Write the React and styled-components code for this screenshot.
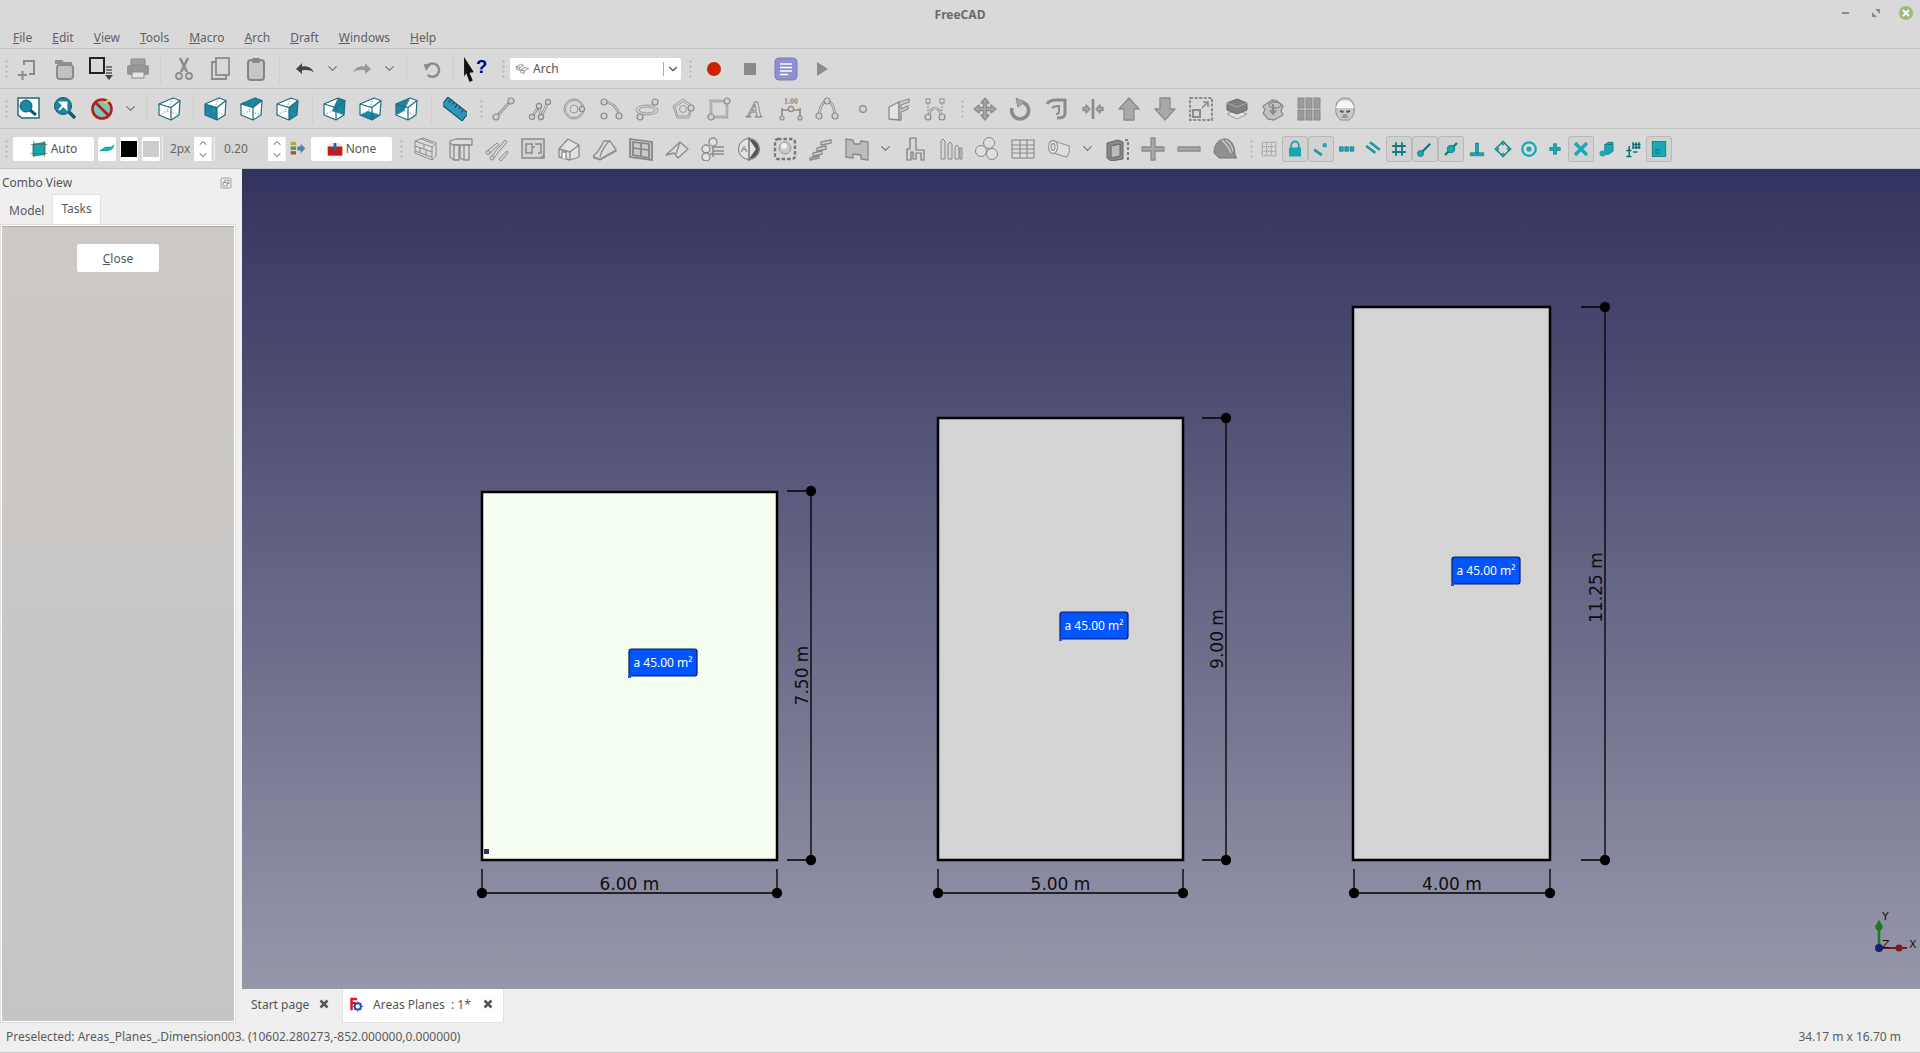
import React from 'react';
import styled, { createGlobalStyle } from 'styled-components';
import { ChevronDown, ChevronUp } from 'lucide-react';

const Global = createGlobalStyle`
  html, body { margin: 0; padding: 0; background: #d9d9d9; overflow: hidden; }
  * { box-sizing: border-box; }
  body { font-family: "Noto Sans", "Open Sans", sans-serif; font-size: 12px; color: #555; }
`;

const Window = styled.div`
  width: 1920px;
  height: 1053px;
  display: flex;
  flex-direction: column;
  background: #d9d9d9;
`;
const TitleBar = styled.div`
  height: 26px;
  display: flex;
  align-items: center;
  justify-content: center;
  position: relative;
  padding-top: 3px;
  font-weight: 700;
  font-size: 12px;
  color: #6a6a6a;
`;
const WinControls = styled.div`
  position: absolute;
  top: 6px;
  right: 7px;
  display: flex;
  align-items: center;
  gap: 16px;
`;
const WinBtn = styled.div`
  width: 14px;
  height: 14px;
  display: flex;
  align-items: center;
  justify-content: center;
`;
const CloseDot = styled(WinBtn)`
  border-radius: 50%;
  background: #9dba7c;
`;
const MenuBar = styled.div`
  height: 23px;
  display: flex;
  align-items: flex-start;
  padding: 1px 0 0 13px;
  gap: 20px;
  line-height: 22px;
  border-bottom: 1px solid #c2c2c2;
  color: #5f5f5f;
`;
const Mn = styled.span`
  text-decoration: underline;
`;
const Row = styled.div`
  height: 40px;
  display: flex;
  align-items: center;
  padding-left: 4px;
  border-bottom: 1px solid #c2c2c2;
`;
const Grip = styled.div`
  width: 5px;
  height: 20px;
  flex: none;
  margin-left: ${p => p.$l || 0}px;
  background: radial-gradient(circle at center, #bdbdbd 1px, transparent 1.2px) center top / 5px 5px repeat-y;
`;
const Sep = styled.div`
  width: 1px;
  height: 28px;
  flex: none;
  background: #cdcdcd;
  margin: 0 ${p => p.$r || 0}px 0 ${p => p.$l || 0}px;
`;
const Tool = styled.div`
  width: ${p => p.$w || 36}px;
  height: 26px;
  flex: none;
  display: flex;
  align-items: center;
  justify-content: center;
  margin-left: ${p => p.$l || 0}px;
  border: 1px solid ${p => (p.$on ? '#b8b8b8' : 'transparent')};
  border-radius: 3px;
  background: ${p => (p.$on ? '#d2d2d2' : 'transparent')};
`;
const Combo = styled.div`
  width: 171px;
  height: 22px;
  margin-left: 4px;
  flex: none;
  display: flex;
  align-items: center;
  padding-left: 5px;
  background: #fff;
  border-radius: 2px;
  color: #555;
  gap: 3px;
`;
const ComboArrow = styled.div`
  margin-left: auto;
  width: 18px;
  height: 14px;
  border-left: 1px solid #aaa;
  display: flex;
  align-items: center;
  justify-content: center;
`;
const WhiteBtn = styled.div`
  width: ${p => p.$w}px;
  height: 24px;
  flex: none;
  margin-left: ${p => p.$l || 0}px;
  display: flex;
  align-items: center;
  justify-content: center;
  gap: 3px;
  background: #fff;
  border-radius: 2px;
  color: #555;
`;
const Swatch = styled.div`
  width: 16px;
  height: 16px;
  background: ${p => p.$c};
`;
const Spin = styled.div`
  width: ${p => p.$w}px;
  height: 24px;
  flex: none;
  margin-left: 2px;
  display: flex;
  border-left: 1px solid #eee;
  border-right: 1px solid #eee;
  color: #666;
`;
const SpinValue = styled.div`
  flex: 1;
  display: flex;
  align-items: center;
  padding-left: ${p => p.$pad}px;
  background: #d6d6d6;
`;
const SpinArrows = styled.div`
  width: 17px;
  background: #fff;
  display: flex;
  flex-direction: column;
  align-items: center;
  justify-content: center;
`;
const Body = styled.div`
  flex: 1;
  min-height: 0;
  display: flex;
`;
const Dock = styled.div`
  width: 242px;
  flex: none;
  display: flex;
  flex-direction: column;
  background: #efefef;
  padding-right: 6px;
`;
const DockHead = styled.div`
  height: 25px;
  display: flex;
  align-items: center;
  justify-content: space-between;
  padding: 2px 3px 0 2px;
  color: #555;
`;
const TabRow = styled.div`
  height: 30px;
  display: flex;
  padding-left: 1px;
`;
const DockTab = styled.div`
  height: ${p => (p.$on ? 30 : 29)}px;
  padding: ${p => (p.$on ? '0 8px 2px' : '3px 7px 0')};
  display: flex;
  align-items: center;
  background: ${p => (p.$on ? '#fff' : 'transparent')};
  border: 1px solid ${p => (p.$on ? '#e2e2e2' : 'transparent')};
  border-bottom: none;
  color: #5a5a5a;
`;
const Pane = styled.div`
  flex: 1;
  border: 1px solid #dedede;
  background: #fff;
  padding: 1px;
  display: flex;
`;
const PaneFill = styled.div`
  flex: 1;
  background: linear-gradient(#cdc9c5, #c5c5c5);
  border-top: 1px solid #aaa;
  display: flex;
  justify-content: center;
  align-items: flex-start;
  padding: 17px 0 0;
`;
const CloseBtn = styled.div`
  width: 82px;
  height: 28px;
  display: flex;
  align-items: center;
  justify-content: center;
  background: #fff;
  border-radius: 2px;
  color: #555;
`;
const Main = styled.div`
  flex: 1;
  min-width: 0;
  display: flex;
  flex-direction: column;
`;
const Canvas = styled.div`
  height: 820px;
  background: linear-gradient(#33335f, #9797ab);
`;
const Drawing = styled.svg`
  display: block;
  width: 1678px;
  height: 820px;
`;
const DocTabs = styled.div`
  flex: 1;
  display: flex;
  background: #efefef;
`;
const DocTab = styled.div`
  width: ${p => p.$w}px;
  display: flex;
  align-items: center;
  padding-left: ${p => p.$pad}px;
  padding-bottom: 3px;
  background: ${p => (p.$on ? '#fff' : 'transparent')};
  border: 1px solid ${p => (p.$on ? '#e2e2e2' : 'transparent')};
  border-top: none;
  color: #555;
`;
const TabText = styled.span`
  margin: 0 ${p => p.$r}px 0 ${p => p.$l || 0}px;
  white-space: pre;
`;
const StatusBar = styled.div`
  height: 30px;
  flex: none;
  display: flex;
  align-items: center;
  justify-content: space-between;
  padding: 0 19px 2px 6px;
  background: #efefef;
  border-bottom: 1px solid #c8c8c8;
  color: #5c5c5c;
`;

const g = { fill: '#d6d6d6', stroke: '#8b8b8b', strokeWidth: 1.3, strokeLinejoin: 'round' };
const t = { fill: '#17a9b5', stroke: '#0f6f7a', strokeWidth: 0.8, strokeLinejoin: 'round' };
const Node = ({ x, y, r = 2.6 }) => <circle cx={x} cy={y} r={r} fill="#d2d2d2" stroke="#8b8b8b" strokeWidth="1.2" />;
const Wire = ({ d }) => (
  <>
    <path d={d} fill="none" stroke="#8b8b8b" strokeWidth="2.6" />
    <path d={d} fill="none" stroke="#e6e6e6" strokeWidth="1" />
  </>
);

const pts = {
  TL: '1,7', T: '15,1', TR: '22,3.5', BR: '21,18', B: '13,23', BL: '1,18', F: '13,10.5', C: '9,14',
};
const faces = {
  front: ['TL', 'F', 'B', 'BL'],
  top: ['TL', 'T', 'TR', 'F'],
  right: ['F', 'TR', 'BR', 'B'],
  rear: ['T', 'TR', 'BR', 'C'],
  bottom: ['BL', 'C', 'BR', 'B'],
  left: ['TL', 'T', 'C', 'BL'],
};
const poly = f => faces[f].map(k => pts[k]).join(' ');
const Cube = ({ face }) => (
  <g>
    <polygon points="1,7 15,1 22,3.5 21,18 13,23 1,18" fill="#fff" />
    {face && <polygon points={poly(face)} fill="#1c86a0" />}
    <path d="M15 1L9 14M1 18L9 14L21 18" stroke="#5a9cae" strokeWidth="0.9" strokeDasharray="1.5 1.5" fill="none" />
    <polygon points="1,7 15,1 22,3.5 21,18 13,23 1,18" fill="none" stroke="#1f6c80" strokeWidth="1.2" strokeLinejoin="round" />
    <path d="M1 7L13 10.5L22 3.5M13 10.5V23" fill="none" stroke="#1f6c80" strokeWidth="1.2" />
  </g>
);

const icons = {
  new: <g fill="none" stroke="#8b8b8b" strokeWidth="2"><path d="M9 8V4h10v13h-5" /><path d="M3 18h9M7.500 14v9" /></g>,
  open: <g><path d="M3 7V3h7l2 2h8v3z" fill="#909090" /><rect x="5" y="8" width="16" height="14" rx="3" fill="#c2c2c2" stroke="#8b8b8b" strokeWidth="2" /></g>,
  saveas: <g><rect x="1" y="1" width="14" height="15" fill="none" stroke="#222" strokeWidth="2" /><path d="M17 10h6M17 13h6M17 16h6" stroke="#555" strokeWidth="1.4" /><path d="M16 18h8l-4 5z" fill="#444" /></g>,
  print: <g><rect x="5" y="2" width="14" height="6" fill="#a0a0a0" stroke="#8b8b8b" /><rect x="1" y="8" width="22" height="10" rx="2" fill="#969696" /><rect x="6" y="15" width="12" height="6" fill="#e4e4e4" stroke="#8b8b8b" /></g>,
  cut: <g fill="none" stroke="#8b8b8b"><path d="M8 1l7 14M16 1L9 15" strokeWidth="2.6" /><circle cx="7" cy="19" r="3" strokeWidth="1.8" /><circle cx="17" cy="19" r="3" strokeWidth="1.8" /></g>,
  copy: <g fill="none" stroke="#8b8b8b" strokeWidth="1.8"><rect x="8" y="1" width="13" height="17" /><path d="M8 5H4v17h14v-4" /></g>,
  paste: <g><rect x="4" y="3" width="16" height="20" rx="3" fill="#c6c6c6" stroke="#858585" strokeWidth="2" /><rect x="8" y="1" width="8" height="5" rx="1.500" fill="#858585" /></g>,
  undo: <path fill="#454545" d="M3 12l6-6v3.500c5-1 10 1 12 6-3-2.500-7-3-12-2V17z" />,
  redo: <path fill="#9a9a9a" d="M21 12l-6-6v3.500C10 8.500 5 10.500 3 15.500c3-2.500 7-3 12-2V17z" />,
  refresh: <g><path d="M7 9a8 8 0 1 1 1 10" fill="none" stroke="#8b8b8b" strokeWidth="3" /><path d="M3 6l9 1-6 7z" fill="#8b8b8b" /></g>,
  whats: <g><path fill="#111" d="M1 1l9 14-4 .5 3 7-3 1.500-3-8-2 3z" /><text x="12" y="16" fontSize="17" fontWeight="700" fontFamily="Liberation Sans, sans-serif" fill="#00008b">?</text></g>,
  macro: <g><rect x="1" y="1" width="22" height="22" rx="4" fill="#8f8fd2" stroke="#7a7ab8" /><path d="M6 7h12M6 10.500h12M6 14h12M6 17.500h8" stroke="#fff" strokeWidth="1.400" /></g>,
  record: <circle cx="12" cy="12" r="7" fill="#cc2200" />,
  stop: <rect x="6" y="6" width="12" height="12" fill="#8a8a8a" />,
  play: <path d="M7 5l11 7-11 7z" fill="#8b8b8b" />,

  fitall: <g><path d="M2 1h21v20H6l-4-3z" fill="#fff" stroke="#1f6c80" strokeWidth="1.500" /><circle cx="10" cy="9" r="6" fill="#1c86a0" stroke="#0f5a6e" /><path d="M14 13l6 5" stroke="#0f5a6e" strokeWidth="3" /></g>,
  fitsel: <g><circle cx="10" cy="9" r="8.500" fill="#1c86a0" stroke="#0f5a6e" /><path d="M6 13l5-5M7 5.500h6.500V12z" stroke="#fff" strokeWidth="1.800" fill="#fff" /><path d="M16 15l6 6" stroke="#0f5a6e" strokeWidth="3.400" /></g>,
  drawstyle: <g><circle cx="12" cy="12" r="9.500" fill="#7fc4bd" stroke="#b3201c" strokeWidth="2.600" /><path d="M5 5l14 14" stroke="#b3201c" strokeWidth="2.600" /><path d="M14 6l6-3" stroke="#e2d04a" strokeWidth="2" /></g>,
  iso: <Cube />,
  vfront: <Cube face="front" />,
  vtop: <Cube face="top" />,
  vright: <Cube face="right" />,
  vrear: <Cube face="rear" />,
  vbottom: <Cube face="bottom" />,
  vleft: <Cube face="left" />,
  ruler: <g transform="rotate(38 12 12)"><rect x="-1" y="7" width="26" height="10" fill="#2e95bb" stroke="#124b60" /><path d="M3 7v4M7 7v3M11 7v4M15 7v3M19 7v4" stroke="#124b60" /></g>,

  line: <g><Wire d="M6 19L19 5" /><Node x={5} y={20} r={3} /><Node x={20} y={4} r={3} /></g>,
  wire: <g><Wire d="M5 20l7-11 2 11 7-15" /><Node x={5} y={20} /><Node x={12} y={9} /><Node x={14} y={20} /><Node x={21} y={5} /></g>,
  circle: <g fill="none" stroke="#9a9a9a"><circle cx="11" cy="12" r="10" /><circle cx="11" cy="12" r="8.500" /><circle cx="11" cy="12" r="4" /><Node x={19} y={12} /></g>,
  arc: <g><Wire d="M5 5c8 0 14 6 15 14" /><Node x={5} y={5} r={3} /><Node x={20} y={19} r={3} /><Node x={5} y={19} r={3} /></g>,
  ellipse: <g fill="none" stroke="#9a9a9a"><ellipse cx="12" cy="13" rx="11" ry="5" /><ellipse cx="12" cy="13" rx="8" ry="3" /><Node x={20} y={5} r={3} /><Node x={5} y={20} r={3} /></g>,
  polygon: <g fill="none" stroke="#9a9a9a"><path d="M12 2l10 7-4 12H6L2 9z" /><path d="M12 4.500l8 5.500-3 9H7l-3-9z" /><circle cx="12" cy="12" r="3.500" /><Node x={20} y={11} r={3} /></g>,
  rect: <g><path d="M4 4h16v16H4z" fill="none" stroke="#8b8b8b" strokeWidth="2.400" /><path d="M4 4h16v16H4z" fill="none" stroke="#e6e6e6" strokeWidth="0.800" /><Node x={20} y={4} r={3} /><Node x={4} y={20} r={3} /></g>,
  text: <text x="12" y="20" textAnchor="middle" fontSize="23" fontWeight="700" fontStyle="italic" fontFamily="Liberation Serif, serif" fill="#e0e0e0" stroke="#808080" strokeWidth="0.800">A</text>,
  dim: <g><text x="12" y="7" textAnchor="middle" fontSize="8" fontWeight="700" fontFamily="Liberation Serif, serif" fill="#8b8b8b">1.00</text><path d="M3 11v9M21 11v9M3 13h18" stroke="#8b8b8b" strokeWidth="1.600" /><Node x={12} y={12} /><Node x={3} y={21} r={2} /><Node x={21} y={21} r={2} /></g>,
  bspline: <g><Wire d="M4 18C5 8 9 4 12 4s7 4 8 14" /><Node x={12} y={4} r={3} /><Node x={4} y={19} r={3} /><Node x={20} y={19} r={3} /></g>,
  point: <Node x={12} y={12} r={3.400} />,
  facebinder: <g {...g}><path d="M2 10l10-5v18l-10-1z" fill="#e4e4e4" /><path d="M12 5l10-3v3l-8 3v4l7-3v3l-7 3v8h-2z" fill="#cfcfcf" /></g>,
  bezier: <g><path d="M5 6v8M19 6v8" stroke="#8b8b8b" strokeDasharray="2 1" /><Wire d="M6 20C6 8 18 8 18 20" /><rect x="3" y="2" width="4" height="4" fill="#e0e0e0" stroke="#8b8b8b" /><rect x="17" y="2" width="4" height="4" fill="#e0e0e0" stroke="#8b8b8b" /><Node x={5} y={20} r={3} /><Node x={19} y={20} r={3} /></g>,
  move: <path {...g} fill="#a8a8a8" d="M12 1l4 5h-2.500v4.500H18V8l5 4-5 4v-2.500h-4.500V18H16l-4 5-4-5h2.500v-4.500H6V16l-5-4 5-4v2.500h4.500V6H8z" />,
  rotate: <g fill="none"><path d="M10 5a8.500 8.500 0 1 1-7 6" stroke="#8b8b8b" strokeWidth="3.600" /><path d="M7 1l8 4-6 5z" fill="#aaa" stroke="#8b8b8b" /></g>,
  offset: <g fill="none" stroke="#8b8b8b"><path d="M2 7c2-3 5-4 9-4h9v13c0 4-2 5-8 5" strokeWidth="3" /><path d="M7 11c2-2 4-2 7-2v6c0 1-1 2-3 2" strokeWidth="2" /></g>,
  mirror: <g {...g} fill="#a8a8a8"><path d="M12 2v20" strokeWidth="2.600" /><path d="M9 12l-4-4v2.500H2v3h3V16zM15 12l4-4v2.500h3v3h-3V16z" /></g>,
  up: <path {...g} fill="#a8a8a8" d="M12 1l10 11h-5v11H7V12H2z" />,
  down: <path {...g} fill="#a8a8a8" d="M12 23l10-11h-5V1H7v11H2z" />,
  scale: <g fill="none" stroke="#8b8b8b"><rect x="1" y="1" width="22" height="22" strokeWidth="2.200" strokeDasharray="3 1.600" /><rect x="4" y="13" width="7" height="7" strokeWidth="2" /><path d="M13 11l6-6M14 5h5v5" strokeWidth="1.600" /></g>,
  shape2d: <g><path d="M2 17l10-4 10 4-10 5z" fill="#e2e2e2" stroke="#9a9a9a" /><path d="M2 6l10-4 10 4v7l-10 4-10-4z" fill="#808080" stroke="#666" /><path d="M2 6l10 4 10-4" fill="none" stroke="#aaa" /></g>,
  draft2d: <g {...g} fill="#c2c2c2"><path d="M2 9l9-6 5 1 6 5-2 5 2 4-9 5-6-1-5-6 2-3z" /><path d="M12 7v10M9 13l3 4 3-4" strokeWidth="2" /><ellipse cx="14" cy="8" rx="6" ry="3" fill="none" /></g>,
  array: <g fill="#9c9c9c" stroke="#888"><rect x="1" y="1" width="6" height="10" /><rect x="9" y="1" width="6" height="10" /><rect x="17" y="1" width="6" height="10" /><rect x="1" y="13" width="6" height="10" /><rect x="9" y="13" width="6" height="10" /><rect x="17" y="13" width="6" height="10" /></g>,
  trooper: <g><path d="M12 1c6 0 9 4 9 10 1 6-2 10-5 12H8c-3-2-6-6-5-12 0-6 3-10 9-10z" fill="#c9c9c9" stroke="#8b8b8b" /><path d="M4 8c2-6 14-6 16 0l1 3H3z" fill="#f6f6f6" /><path d="M7 13l4 1-1 2-3-1zM17 13l-4 1 1 2 3-1z" fill="#555" /><path d="M9 20h6M10 18h4" stroke="#666" strokeWidth="1.200" /></g>,

  wall: <g {...g} fill="#dcdcdc" strokeWidth="1"><path d="M2 4l8-3 13 5v13l-4 4-17-7z" /><path d="M2 4l17 6v13M19 10l4-4M2 9l17 6M2 14l17 6M11 7v5M7 10v5M13 13v5M7 1.500l13 5" fill="none" /></g>,
  structure: <g {...g} fill="#dcdcdc"><path d="M1 4l6-2h16v6H4L1 6z" /><path d="M5 8h5v15H5zM15 8h5v15h-5z" /><path d="M1 6v14l4 3M11 8v13l4 2" fill="none" /></g>,
  rebar: <g fill="#d4d4d4" stroke="#8b8b8b"><path d="M2 14L12 6l2 2L4 17zM6 20L20 3l2 2L8 22zM14 22l8-8 1 2-7 8z" /><circle cx="3" cy="15.500" r="2" /><circle cx="7" cy="21" r="2" /></g>,
  floor: <g fill="none" stroke="#8b8b8b" strokeWidth="1.500"><rect x="1" y="2" width="22" height="19" fill="#d4d4d4" /><path d="M5 7h6v9H5zM11 10h3M14 7h6v9h-3" /><path d="M20 21l3-3" /></g>,
  building: <g {...g} fill="#e2e2e2"><path d="M2 12L11 2l11 6v12l-9 3-11-3z" /><path d="M2 12l11 3 9-7M13 15v8" fill="none" /><path d="M5 21v-6h4v7" fill="#fff" /></g>,
  site: <g {...g} fill="#dcdcdc"><path d="M1 18c5-3 7-9 10-14h6c2 3 5 7 6 9l-16 9-6-2z" /><path d="M1 18v3l6 2 16-9v-1M7 20c1-5 6-14 10-16" fill="none" /></g>,
  window: <g fill="none" stroke="#858585" strokeWidth="1.700"><path d="M1 2l22 3v18L1 20z" fill="#c8c8c8" /><path d="M4 5l16 2v14L4 18zM12 6v13M4 11l16 2" /></g>,
  roof: <g {...g} fill="#dcdcdc"><path d="M1 18L15 5l8 7-10 9-4-5z" /><path d="M15 5l-4 12" fill="none" /></g>,
  axis: <g fill="none" stroke="#8b8b8b" strokeWidth="1.300"><circle cx="12" cy="5" r="4" fill="#e2e2e2" /><circle cx="5" cy="12" r="4" fill="#e2e2e2" /><circle cx="5" cy="20" r="4" fill="#e2e2e2" /><path d="M12 10h11M12 14h11M12 10v10M9 17h14" strokeWidth="1.500" /></g>,
  space: <g><circle cx="12" cy="12" r="10.500" fill="#e2e2e2" stroke="#777" /><path d="M12 2a10 10 0 0 1 0 20l7-10z" fill="#555" /><path d="M12 0v24" stroke="#777" strokeWidth="1.500" /><text x="7" y="15" textAnchor="middle" fontSize="9" fontFamily="Liberation Sans, sans-serif" fill="#555">A</text></g>,
  equipment: <g><rect x="2" y="2" width="20" height="20" rx="3" fill="none" stroke="#777" strokeWidth="2.400" strokeDasharray="3.500 2" /><circle cx="12" cy="11" r="6" fill="#c8c8c8" stroke="#999" /><circle cx="11" cy="9" r="3" fill="#f2f2f2" /></g>,
  stair: <g {...g} fill="#dcdcdc"><path d="M1 21l9-2v2l-9 2zM4 16l9-2v3l-9 2zM8 11l9-2v3l-9 2zM12 5l10-2v3l-10 2z" /></g>,
  panel: <g {...g} fill="#bcbcbc"><path d="M1 2l7 1 1 4 6 0 1-3 7 1v18l-7-1v-4l-8-1v4l-7-1z" /></g>,
  chair: <g fill="#d8d8d8" stroke="#7a7a7a" strokeWidth="1.200"><path d="M7 1h6v12h8v10h-3v-7h-5v6h-3v-7H8v8H4V12h3z" /></g>,
  framework: <g fill="#d6d6d6" stroke="#888"><path d="M2 22V4l2-2 2 2v18zM9 22V7l2-2 2 2v15zM16 22V10l2-2 2 2v12z" /><path d="M21 22V11h2v11z" /></g>,
  balls: <g fill="#dedede" stroke="#888"><circle cx="14" cy="6" r="5.500" /><circle cx="6" cy="14" r="5.500" /><circle cx="17" cy="17" r="5.500" /></g>,
  schedule: <g fill="#dcdcdc" stroke="#888" strokeWidth="1.100"><rect x="1" y="3" width="22" height="18" /><path d="M1 8h22M1 12h22M1 16h22M9 3v18M16 3v18" /></g>,
  pipe: <g fill="#dedede" stroke="#9a9a9a" strokeWidth="1.300"><path d="M7 4l15 5c1 3 0 8-2 11L6 16z" /><ellipse cx="6" cy="10" rx="4.500" ry="6.500" fill="#f0f0f0" /><ellipse cx="6" cy="10" rx="2" ry="3.500" /></g>,
  cutplane: <g><path d="M2 6l11-3 5 2v17l-12 2-4-3z" fill="#888" stroke="#666" /><path d="M6 9l9-2v12l-9 2z" fill="#bbb" stroke="#666" /><path d="M20 3h3v19h-3" fill="none" stroke="#666" strokeWidth="1.600" strokeDasharray="3 2" /></g>,
  plus: <path {...g} fill="#a8a8a8" d="M10 1h4v9h9v4h-9v9h-4v-9H1v-4h9z" />,
  minus: <rect {...g} fill="#a8a8a8" x="1" y="10" width="22" height="4" />,
  hat: <g><path d="M1 16C1 7 6 2 12 2c6 0 10 6 10 16l2 3H6z" fill="#8f8f8f" stroke="#777" /><path d="M9 3c3 3 7 7 9 13M13 3c3 2 6 6 7 11" stroke="#ccc" strokeWidth="1.300" fill="none" /></g>,

  sgrid: <g fill="none" stroke="#777" strokeWidth="1" strokeDasharray="1.500 1"><rect x="3" y="3" width="18" height="18" /><path d="M3 9h18M3 15h18M9 3v18M15 3v18" /></g>,
  lock: <g><path d="M7 11V7a5 5 0 0 1 10 0v4" fill="none" stroke="#16a5b2" strokeWidth="2.400" /><rect x="4" y="10" width="16" height="12" fill="#16a5b2" /></g>,
  near: <g><path d="M3 13l10 7" stroke="#0f6f7a" strokeWidth="3.400" /><path d="M3 13l10 7" stroke="#17b6c2" strokeWidth="1.800" /><circle cx="17" cy="7" r="3" fill="#17a9b5" /></g>,
  dots: <g {...t}><rect x="2" y="9" width="5" height="6" /><rect x="9" y="9" width="5" height="6" /><rect x="16" y="9" width="5" height="6" /></g>,
  parallel: <g stroke="#0f6f7a" strokeWidth="3"><path d="M3 8l12 9M8 3l13 10" /><path d="M3 8l12 9M8 3l13 10" stroke="#17b6c2" strokeWidth="1.400" /></g>,
  hash: <path d="M8 3v18M16 3v18M3 8h18M3 16h18" stroke="#0f7a85" strokeWidth="2.400" />,
  endp: <g><path d="M6 18L19 5" stroke="#0f7a85" strokeWidth="3" /><circle cx="6" cy="18" r="4" fill="#17a9b5" stroke="#0f6f7a" /></g>,
  midp: <g><path d="M4 20L20 4" stroke="#0f7a85" strokeWidth="3" /><circle cx="12" cy="12" r="5" fill="#17a9b5" stroke="#0f6f7a" /></g>,
  perp: <g {...t}><path d="M10 4h4v13h-4z" /><path d="M3 17h18v4H3z" /></g>,
  angle: <g><path d="M12 2l10 10-10 10L2 12z" fill="none" stroke="#0f6f7a" strokeWidth="1.600" /><g {...t}><path d="M12 1l3 3-3 3-3-3zM12 17l3 3-3 3-3-3zM4 9l3 3-3 3-3-3zM20 9l3 3-3 3-3-3z" /></g></g>,
  center: <g fill="none"><circle cx="12" cy="12" r="9" stroke="#17a9b5" strokeWidth="3" /><circle cx="12" cy="12" r="3.500" fill="#17a9b5" /></g>,
  extension: <path {...t} d="M10 5h4v5h5v4h-5v5h-4v-5H5v-4h5z" />,
  inter: <path d="M4 4l16 16M20 4L4 20" stroke="#17a9b5" strokeWidth="4.600" />,
  block: <g><path d="M9 6l5-3h6v12l-6 4H9z" fill="#17a9b5" stroke="#0f6f7a" /><path d="M9 6h11" stroke="#0f6f7a" /><circle cx="6" cy="18" r="4" fill="#17a9b5" /></g>,
  special: <path d="M3 22h7M7 22V8M3 14h7M12 3v9M16 3v9M20 3v9M11 6h11M11 10h11M12 16h6" stroke="#0f6f7a" strokeWidth="2" fill="none" />,
  wplane: <g><rect x="3" y="2" width="18" height="20" fill="#17a9b5" stroke="#0f6f7a" /><rect x="8" y="13" width="4" height="5" fill="none" stroke="#0f6f7a" /></g>,

  auto: <g><rect x="4" y="4" width="16" height="16" fill="#19a7a7" stroke="#0f6f7a" transform="skewY(-8) translate(0 2)" /><path d="M5 1v22M19 1v22M1 6h22M1 18h22" stroke="#566" strokeWidth="0.900" /></g>,
  wirecolor: <g><path d="M1 15l8-6h9l5-3-3 6-7 3H5z" fill="#19b0b0" stroke="#0f7a7a" strokeWidth="0.600" /></g>,
  apply: <g><rect x="1" y="2" width="8" height="5" fill="#c9a227" /><rect x="1" y="9" width="8" height="5" fill="#4b9a4b" /><rect x="1" y="16" width="8" height="5" fill="#b84a3a" /><path d="M11 9h5V5l7 7-7 7v-4h-5z" fill="#4f7fb0" /></g>,
  none: <g><rect x="1" y="8" width="22" height="14" fill="#c9181c" /><path d="M1 8l5-5h12l5 5" fill="#e8e8e8" /><path d="M12 16l5-6h-3V3h-4v7H7z" fill="#2d5fa0" /></g>,
  bricks: <g fill="#eee" stroke="#777" strokeWidth="1.100"><path d="M2 9l7-4 5 2-7 4zM9 14l7-4 6 2-7 4z" /><path d="M2 9v4l5 2v-4zM9 14v4l6 2v-4z" /></g>,
  floatbtn: <g fill="none" stroke="#666"><rect x="3.500" y="3.500" width="17" height="17" rx="2" /><rect x="10" y="7" width="7" height="6" /><rect x="7" y="11" width="7" height="6" fill="#efefef" /></g>,
  x: <path d="M5 5l14 14M19 5L5 19" stroke="#555" strokeWidth="5" />,
  fc: <g><path d="M2 1h11v4H6v3h5v3H6v10H2z" fill="#e8151b" /><circle cx="14" cy="15" r="5" fill="none" stroke="#1d4fb8" strokeWidth="3" /><path d="M14 7v2M14 21v2M6 15h2M20 15h2M8.500 9.500l1.500 1.500M18 19l1.500 1.500M19.500 9.500L18 11M10 19l-1.500 1.500" stroke="#1d4fb8" strokeWidth="2" /></g>,
};

const Icon = ({ name, size = 24 }) => (
  <svg width={size} height={size} viewBox="0 0 24 24">{icons[name]}</svg>
);
const Btn = ({ name, w, l, on, size }) => (
  <Tool $w={w} $l={l} $on={on}><Icon name={name} size={size} /></Tool>
);
const Chev = ({ w = 18, l }) => (
  <Tool $w={w} $l={l}><ChevronDown size={15} color="#777" /></Tool>
);
const run = (names, props) => names.map(n => <Btn key={n} name={n} {...props} />);

const menus = ['File', 'Edit', 'View', 'Tools', 'Macro', 'Arch', 'Draft', 'Windows', 'Help'];

const Rectangle = ({ x, y, w, h, fill }) => (
  <rect x={x} y={y} width={w} height={h} fill={fill} stroke="#000" strokeWidth="2.500" />
);

const Dims = ({ x1, x2, top, vx, hLabel, vLabel, shift = 0 }) => (
  <g stroke="#000" strokeWidth="1.300" fill="#000">
    <path d={`M${x1} 869V893H${x2}M${x2} 869V893`} fill="none" />
    <circle cx={x1} cy={893} r={4.500} />
    <circle cx={x2} cy={893} r={4.500} />
    <path d={`M${vx - 24} ${top}H${vx}V860H${vx - 24}`} fill="none" />
    <circle cx={vx} cy={top} r={4.500} />
    <circle cx={vx} cy={860} r={4.500} />
    <text x={(x1 + x2) / 2} y={890} textAnchor="middle" stroke="none" fill="#0d0d0d" fontFamily="DejaVu Sans, sans-serif" fontSize="17">{hLabel}</text>
    <text transform={`translate(${vx - 3} ${(top + 860) / 2 + shift}) rotate(-90)`} textAnchor="middle" stroke="none" fill="#0d0d0d" fontFamily="DejaVu Sans, sans-serif" fontSize="17">{vLabel}</text>
  </g>
);

const AreaTag = ({ x, y }) => (
  <g>
    <rect x={x} y={y} width={68} height={27} rx={2.500} fill="#0055ff" stroke="#0b1a66" strokeWidth="1.200" />
    <rect x={x - 1} y={y + 26} width={3} height={3} fill="#0a5cff" />
    <text x={x + 34} y={y + 18} textAnchor="middle" fill="#fff" fontFamily="Noto Sans, sans-serif" fontSize="12">a 45.00 m²</text>
  </g>
);

const Axes = () => (
  <g fontFamily="DejaVu Sans, sans-serif" fontSize="11" fill="#111">
    <path d="M1879 948V921" stroke="#1c7a22" strokeWidth="2.500" />
    <path d="M1875 927h8l-4-7z" fill="#1c7a22" />
    <circle cx="1879" cy="927" r="3.500" fill="#1c7a22" />
    <path d="M1879 948H1907" stroke="#7a1c1c" strokeWidth="2" />
    <circle cx="1899" cy="948" r="3.500" fill="#7a1c1c" />
    <circle cx="1879" cy="948" r="4" fill="#1a1a7a" />
    <text x="1882" y="920">Y</text>
    <text x="1909" y="948">X</text>
    <text x="1882" y="948">Z</text>
  </g>
);

export default function App() {
  return (
    <Window>
      <Global />
      <TitleBar>
        FreeCAD
        <WinControls>
          <WinBtn>
            <svg width="8" height="4"><rect width="7" height="2" y="1" fill="#8a8a8a" /></svg>
          </WinBtn>
          <WinBtn>
            <svg width="10" height="10"><path d="M4 1h5v5zM1 4l5 5H1z" fill="#8a8a8a" /></svg>
          </WinBtn>
          <CloseDot>
            <svg width="8" height="8"><path d="M1 1l6 6M7 1L1 7" stroke="#fff" strokeWidth="1.800" /></svg>
          </CloseDot>
        </WinControls>
      </TitleBar>
      <MenuBar>
        {menus.map(m => (
          <span key={m}><Mn>{m[0]}</Mn>{m.slice(1)}</span>
        ))}
      </MenuBar>

      <Row>
        <Grip />
        {run(['new'])}
        {run(['open', 'saveas', 'print'], { l: 1 })}
        <Sep $l={4} $r={5} />
        {run(['cut', 'copy', 'paste'])}
        <Sep $l={5} $r={7} />
        <Btn name="undo" />
        <Chev />
        <Btn name="redo" l={3} />
        <Chev />
        <Sep $l={8} $r={6} />
        <Btn name="refresh" size={20} />
        <Sep $l={4} $r={4} />
        <Btn name="whats" size={26} />
        <Grip $l={7} />
        <Combo>
          <Icon name="bricks" size={15} />
          Arch
          <ComboArrow><ChevronDown size={14} color="#555" /></ComboArrow>
        </Combo>
        <Grip $l={7} />
        <Btn name="record" l={3} />
        {run(['stop', 'macro', 'play'])}
      </Row>

      <Row>
        <Grip />
        <Btn name="fitall" l={1} />
        <Btn name="fitsel" l={1} />
        <Btn name="drawstyle" l={1} />
        <Chev w={20} />
        <Sep $l={6} $r={5} />
        <Btn name="iso" />
        <Sep $l={5} $r={4} />
        {run(['vfront', 'vtop', 'vright'])}
        <Sep $l={6} $r={4} />
        {run(['vrear', 'vbottom', 'vleft'])}
        <Sep $l={6} $r={5} />
        <Btn name="ruler" />
        <Grip $l={6} />
        <Btn name="line" l={1} />
        {run(['wire', 'circle', 'arc', 'ellipse', 'polygon', 'rect', 'text', 'dim', 'bspline', 'point', 'facebinder', 'bezier'])}
        <Grip $l={7} />
        <Btn name="move" l={2} />
        {run(['rotate', 'offset', 'mirror', 'up', 'down', 'scale', 'shape2d', 'draft2d', 'array', 'trooper'])}
      </Row>

      <Row>
        <Grip />
        <WhiteBtn $w={81} $l={4}><Icon name="auto" size={18} />Auto</WhiteBtn>
        <WhiteBtn $w={18} $l={4}><Icon name="wirecolor" size={16} /></WhiteBtn>
        <WhiteBtn $w={18} $l={4}><Swatch $c="#000" /></WhiteBtn>
        <WhiteBtn $w={18} $l={4}><Swatch $c="#cccccc" /></WhiteBtn>
        <Spin $w={50}>
          <SpinValue $pad={7}>2px</SpinValue>
          <SpinArrows><ChevronUp size={12} color="#555" /><ChevronDown size={12} color="#555" /></SpinArrows>
        </Spin>
        <Spin $w={72}>
          <SpinValue $pad={9}>0.20</SpinValue>
          <SpinArrows><ChevronUp size={12} color="#555" /><ChevronDown size={12} color="#555" /></SpinArrows>
        </Spin>
        <Tool $w={18} $l={3}><Icon name="apply" size={17} /></Tool>
        <WhiteBtn $w={81} $l={4}><Icon name="none" size={16} />None</WhiteBtn>
        <Grip $l={7} />
        <Btn name="wall" l={3} />
        {run(['structure', 'rebar', 'floor', 'building', 'site', 'window', 'roof', 'axis', 'space', 'equipment', 'stair', 'panel'])}
        <Chev w={20} />
        <Btn name="chair" l={2} />
        {run(['framework', 'balls', 'schedule', 'pipe'])}
        <Chev w={20} />
        <Btn name="cutplane" l={2} />
        {run(['plus', 'minus', 'hat'])}
        <Grip $l={6} />
        <Btn name="sgrid" w={26} l={2} size={18} />
        <Btn name="lock" w={26} on size={18} />
        <Btn name="near" w={26} on size={18} />
        <Btn name="dots" w={26} size={18} />
        <Btn name="parallel" w={26} size={18} />
        <Btn name="hash" w={26} on size={18} />
        <Btn name="endp" w={26} on size={18} />
        <Btn name="midp" w={26} on size={18} />
        <Btn name="perp" w={26} size={18} />
        <Btn name="angle" w={26} size={18} />
        <Btn name="center" w={26} size={18} />
        <Btn name="extension" w={26} size={18} />
        <Btn name="inter" w={26} on size={18} />
        <Btn name="block" w={26} size={18} />
        <Btn name="special" w={26} size={18} />
        <Btn name="wplane" w={26} on size={18} />
      </Row>

      <Body>
        <Dock>
          <DockHead>
            Combo View
            <Icon name="floatbtn" size={14} />
          </DockHead>
          <TabRow>
            <DockTab>Model</DockTab>
            <DockTab $on>Tasks</DockTab>
          </TabRow>
          <Pane>
            <PaneFill>
              <CloseBtn><span><Mn>C</Mn>lose</span></CloseBtn>
            </PaneFill>
          </Pane>
        </Dock>
        <Main>
          <Canvas>
            <Drawing viewBox="242 169 1678 820">
              <Rectangle x={482} y={492} w={295} h={368} fill="#f4fff1" />
              <rect x={484} y={849} width={5} height={5} fill="#33335a" />
              <Rectangle x={938} y={418} w={245} h={442} fill="#d4d4d4" />
              <Rectangle x={1353} y={307} w={197} h={553} fill="#d4d4d4" />
              <Dims x1={482} x2={777} top={491} vx={811} hLabel="6.00 m" vLabel="7.50 m" />
              <Dims x1={938} x2={1183} top={418} vx={1226} hLabel="5.00 m" vLabel="9.00 m" />
              <Dims x1={1354} x2={1550} top={307} vx={1605} hLabel="4.00 m" vLabel="11.25 m" shift={4} />
              <AreaTag x={629} y={649} />
              <AreaTag x={1060} y={612} />
              <AreaTag x={1452} y={557} />
              <Axes />
            </Drawing>
          </Canvas>
          <DocTabs>
            <DocTab $w={100} $pad={8}>
              <TabText $r={9}>Start page</TabText>
              <Icon name="x" size={12} />
            </DocTab>
            <DocTab $on $w={162} $pad={6}>
              <Icon name="fc" size={15} />
              <TabText $l={9} $r={11}>Areas Planes  : 1*</TabText>
              <Icon name="x" size={12} />
            </DocTab>
          </DocTabs>
        </Main>
      </Body>
      <StatusBar>
        <span>Preselected: Areas_Planes_.Dimension003. (10602.280273,-852.000000,0.000000)</span>
        <span>34.17 m x 16.70 m</span>
      </StatusBar>
    </Window>
  );
}
